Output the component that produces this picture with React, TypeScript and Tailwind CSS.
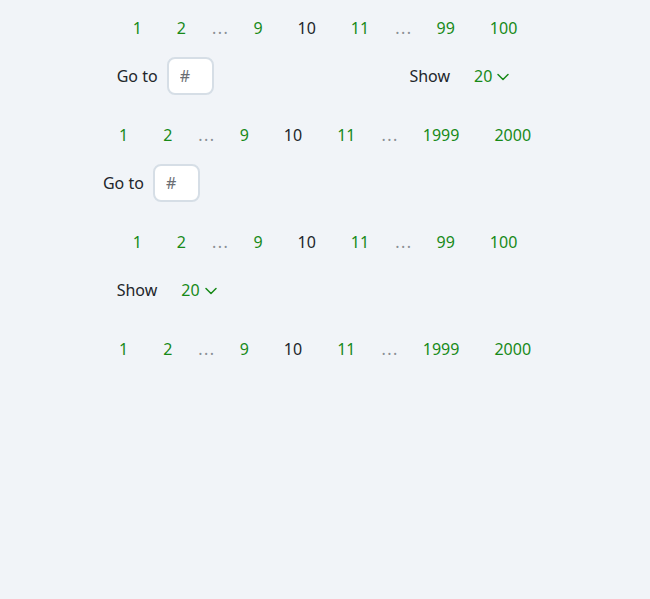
import React from "react";

type Item = string;

const GREEN = "text-[#188a18]";

function Pages({ items }: { items: Item[] }) {
  return (
    <div className="flex items-center gap-[3px]">
      {items.map((it, i) =>
        it === "…" ? (
          <span key={i} className="h-10 flex items-center pl-[7px] pr-[5px] text-[#8a8f95] tracking-[1.5px]">
            ...
          </span>
        ) : it === "10" ? (
          <span key={i} className="h-10 flex items-center px-4 text-[#22262b]">
            {it}
          </span>
        ) : (
          <a key={i} className={`h-10 flex items-center px-4 ${GREEN} cursor-pointer`}>
            {it}
          </a>
        )
      )}
    </div>
  );
}

function GoTo() {
  return (
    <div className="flex items-center gap-[9px]">
      <span className="text-[#22262b]">Go to</span>
      <input
        placeholder="#"
        className="w-[47px] h-[38px] border-2 border-[#d6dee6] rounded-lg bg-white pl-[11px] outline-none placeholder:text-[#6a6e73] text-[#22262b]"
      />
    </div>
  );
}

function Show() {
  return (
    <div className="flex items-center pr-6">
      <span className="text-[#22262b]">Show</span>
      <span className={`ml-6 ${GREEN}`}>20</span>
      <svg width="12" height="8" viewBox="0 0 12 8" className="ml-[5px] mt-[1px]">
        <path d="M1 1.5 L6 6.5 L11 1.5" fill="none" stroke="#188a18" strokeWidth="1.5" strokeLinecap="round" strokeLinejoin="round" />
      </svg>
    </div>
  );
}

const short = ["1", "2", "…", "9", "10", "11", "…", "99", "100"];
const long = ["1", "2", "…", "9", "10", "11", "…", "1999", "2000"];

export default function App() {
  return (
    <div
      className="min-h-screen bg-[#f1f4f8] pt-2 flex flex-col items-center gap-5 text-base"
      style={{ fontFamily: '"Noto Sans", "Open Sans", sans-serif' }}
    >
      <div className="flex flex-col gap-[9px]">
        <Pages items={short} />
        <div className="flex items-center justify-between h-[38px]">
          <GoTo />
          <Show />
        </div>
      </div>
      <div className="flex flex-col gap-[9px]">
        <Pages items={long} />
        <div className="flex items-center justify-between h-[38px]">
          <GoTo />
        </div>
      </div>
      <div className="flex flex-col gap-[9px]">
        <Pages items={short} />
        <div className="flex items-center justify-between h-[38px]">
          <Show />
        </div>
      </div>
      <div className="flex flex-col gap-[9px]">
        <Pages items={long} />
      </div>
    </div>
  );
}
